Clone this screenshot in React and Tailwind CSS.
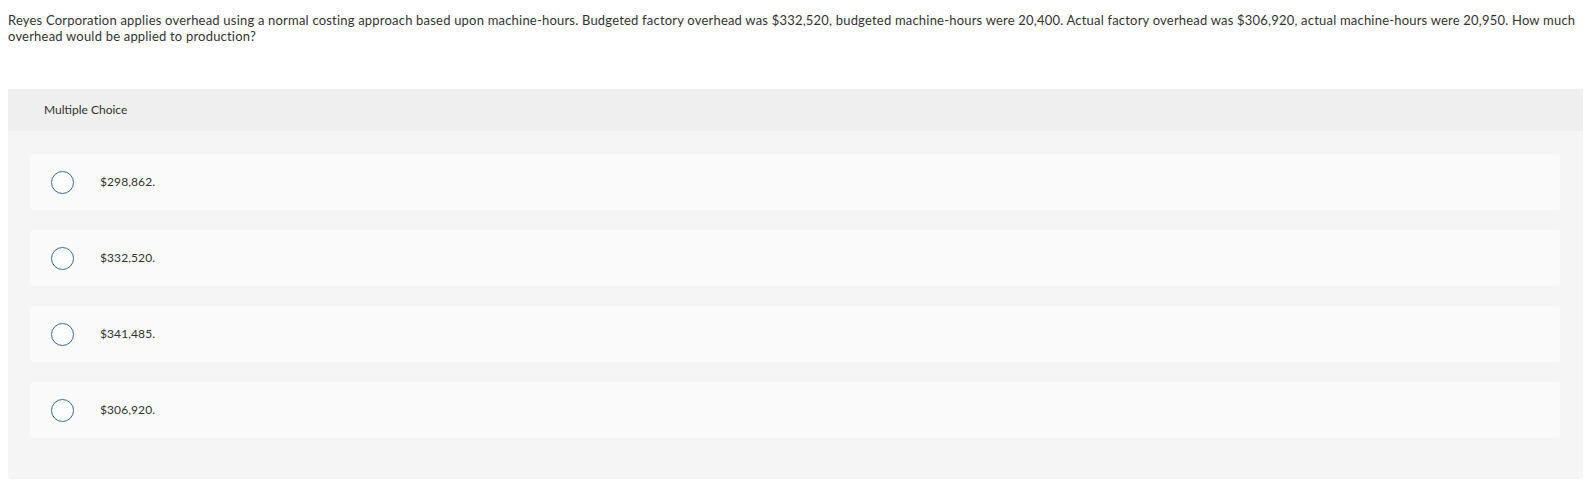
const options = ['$298,862.', '$332,520.', '$341,485.', '$306,920.'];

export default function App() {
  return (
    <div className="w-[1587px] h-[482px] bg-white text-[#333] font-['Lato','Open_Sans',sans-serif]">
      <p className="pl-2 pr-1 pt-[12px] text-[13px] leading-[16px] tracking-[0.2px] text-[#333]">
        Reyes Corporation applies overhead using a normal costing approach based upon machine-hours. Budgeted factory overhead was $332,520, budgeted machine-hours were 20,400. Actual factory overhead was $306,920, actual machine-hours were 20,950. How much overhead would be applied to production?
      </p>
      <div className="ml-2 mr-1 mt-[45px] h-[390px] bg-[#f5f5f5] rounded-sm">
        <div className="h-[42px] bg-[#efefef] flex items-center pl-9 text-[12px] text-[#333]">
          Multiple Choice
        </div>
        <div className="pt-[23px] pl-[22px] pr-[23px] flex flex-col gap-5">
          {options.map(function (opt) {
            return (
              <div key={opt} className="h-14 bg-[#fafafa] rounded-sm flex items-center pl-[21px]">
                <span className="w-[23px] h-[23px] rounded-full border-[1.5px] border-[#3b6a98] bg-white shrink-0" />
                <span className="ml-[26px] text-[12px] text-[#333] tracking-[0.1px]">{opt}</span>
              </div>
            );
          })}
        </div>
      </div>
    </div>
  );
}
